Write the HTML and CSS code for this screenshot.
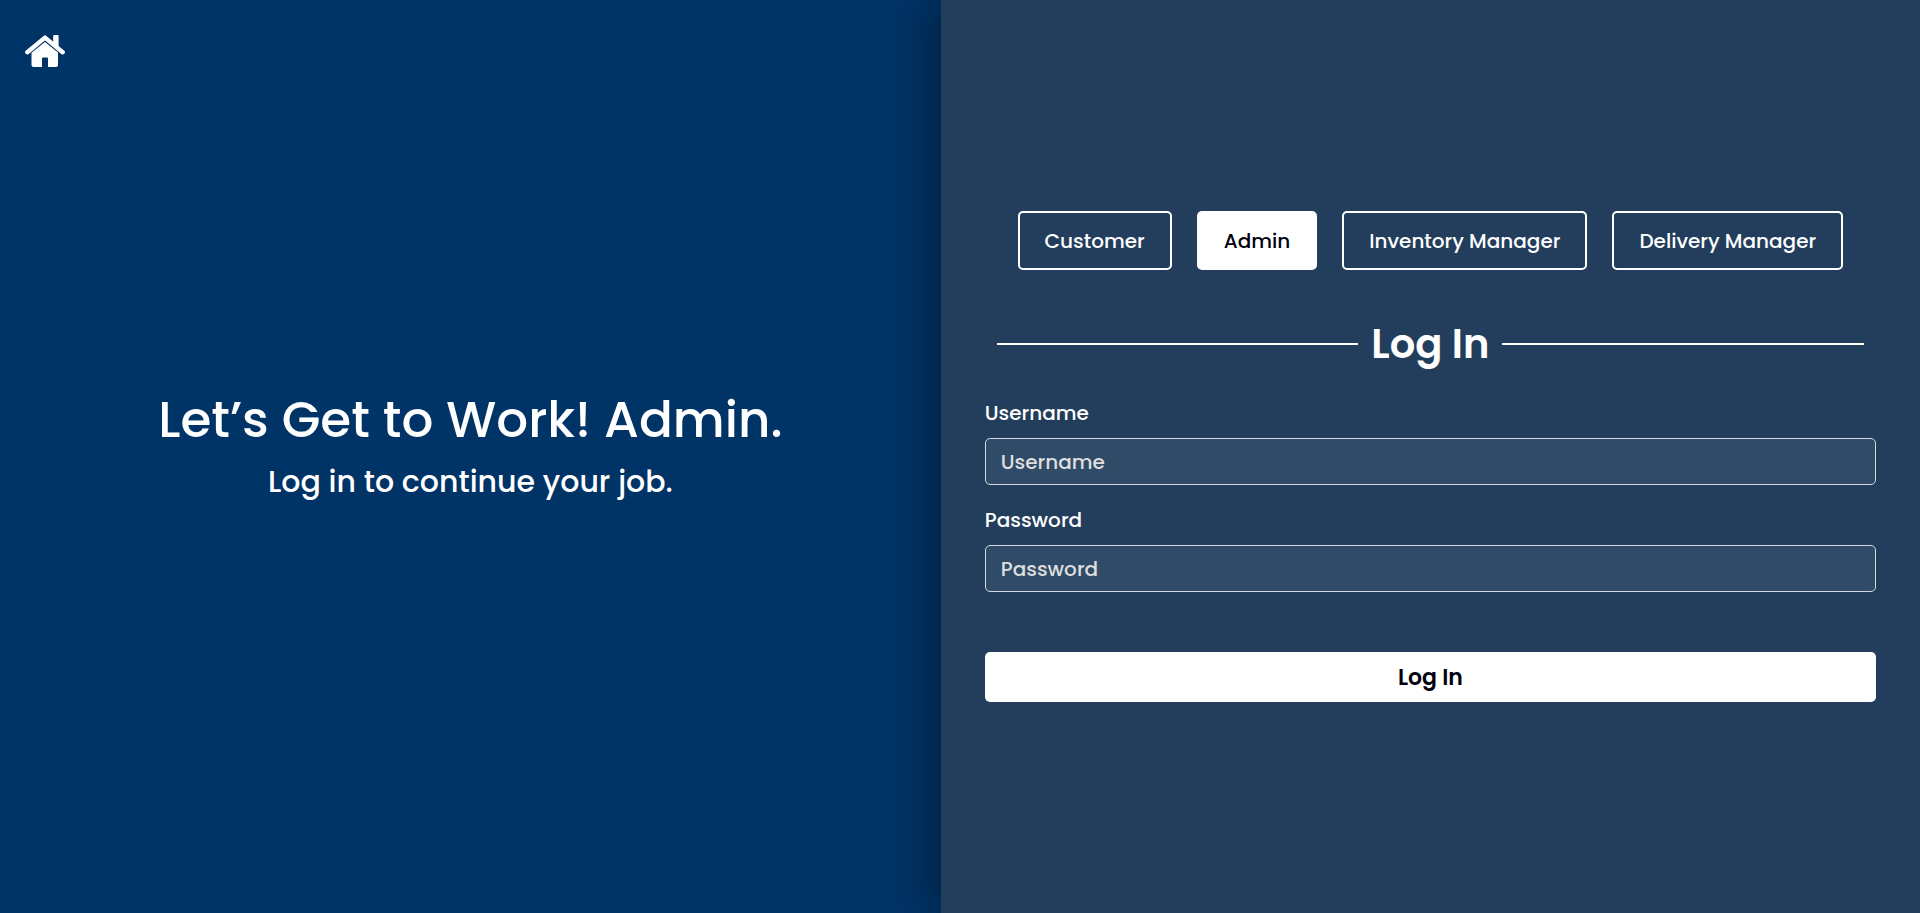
FILE: index.html
```html
<!DOCTYPE html>
<html lang="en">
<head>
<meta charset="utf-8">
<meta name="viewport" content="width=device-width, initial-scale=1">
<title>Log In</title>
<link rel="stylesheet" href="styles.css">
</head>
<body>
<div class="page">
  <section class="welcome">
    <a class="home" href="#" aria-label="Home">
      <svg class="home-icon" viewBox="0 0 40 32" aria-hidden="true">
        <path d="M2.3 17.2 20 2.6 37.7 17.2" fill="none" stroke="currentColor" stroke-width="4.4" stroke-linecap="round" stroke-linejoin="round"/>
        <path d="M28.2 1Q28.2 0 29.2 0H32.6Q33.6 0 33.6 1V13L28.2 8.5Z" fill="currentColor"/>
        <path d="M20 7 33 17.6V30Q33 32 31 32H23V23.6Q23 22.6 22 22.6H18Q17 22.6 17 23.6V32H8.500Q6.500 32 6.500 30V17.800Z" fill="currentColor"/>
      </svg>
    </a>
    <h1 class="welcome-title">Let’s Get to Work! Admin.</h1>
    <p class="welcome-text">Log in to continue your job.</p>
  </section>
  <main class="panel">
    <nav class="roles">
      <button class="role" type="button">Customer</button>
      <button class="role role-active" type="button">Admin</button>
      <button class="role" type="button">Inventory Manager</button>
      <button class="role" type="button">Delivery Manager</button>
    </nav>
    <h2 class="heading">Log In</h2>
    <form class="form">
      <div class="field">
        <label class="label" for="username">Username</label>
        <input class="input" id="username" type="text" placeholder="Username">
      </div>
      <div class="field">
        <label class="label" for="password">Password</label>
        <input class="input" id="password" type="password" placeholder="Password">
      </div>
      <button class="submit" type="submit">Log In</button>
    </form>
  </main>
</div>
</body>
</html>
```
FILE: styles.css
```css
* {
  box-sizing: border-box;
}

body {
  margin: 0;
  background: #003366;
  color: #fff;
  font-family: Poppins, Inter, sans-serif;
  font-weight: 500;
}

button,
input {
  font: inherit;
}

.page {
  display: flex;
  min-height: 100vh;
}

.welcome {
  position: relative;
  width: 49%;
  display: flex;
  flex-direction: column;
  align-items: center;
  justify-content: center;
  padding: 24px 24px 50px;
  text-align: center;
}

.home {
  position: absolute;
  top: 35px;
  left: 25px;
  color: #fff;
}

.home-icon {
  display: block;
  width: 40px;
  height: 32px;
}

.welcome-title {
  margin: 0;
  font-size: 50px;
  font-weight: 500;
  line-height: 76px;
}

.welcome-text {
  margin: 0;
  font-size: 30px;
  line-height: 48px;
}

.panel {
  width: 51%;
  display: flex;
  flex-direction: column;
  justify-content: center;
  padding: 32px 44px;
  background: #223e5c;
  box-shadow: 0 0 50px rgba(0, 0, 0, 0.5);
}

.roles {
  display: flex;
  justify-content: center;
  gap: 25px;
}

.role {
  height: 59px;
  padding: 0 25px;
  border: 2px solid #fff;
  border-radius: 5px;
  background: transparent;
  color: #fff;
  font-size: 20px;
  white-space: nowrap;
}

.role-active {
  background: #fff;
  color: #02020f;
}

.heading {
  display: flex;
  align-items: center;
  gap: 13px;
  margin: 44px 12px 24px;
  font-size: 40px;
  font-weight: 600;
  line-height: 60px;
}

.heading::before,
.heading::after {
  content: "";
  flex: 1;
  height: 2px;
  background: #fff;
}

.form {
  display: flex;
  flex-direction: column;
  gap: 20px;
}

.field {
  display: flex;
  flex-direction: column;
  gap: 10px;
}

.label {
  font-size: 20px;
  line-height: 30px;
}

.input {
  width: 100%;
  height: 47px;
  padding: 0 15px;
  border: 1px solid #d3d8de;
  border-radius: 5px;
  background: #304b67;
  color: #fff;
  font-size: 20px;
}

.input::placeholder {
  color: #dedede;
  opacity: 1;
}

.submit {
  height: 50px;
  margin-top: 40px;
  border: 0;
  border-radius: 5px;
  background: #fff;
  color: #02020f;
  font-size: 22px;
  font-weight: 600;
}
```
